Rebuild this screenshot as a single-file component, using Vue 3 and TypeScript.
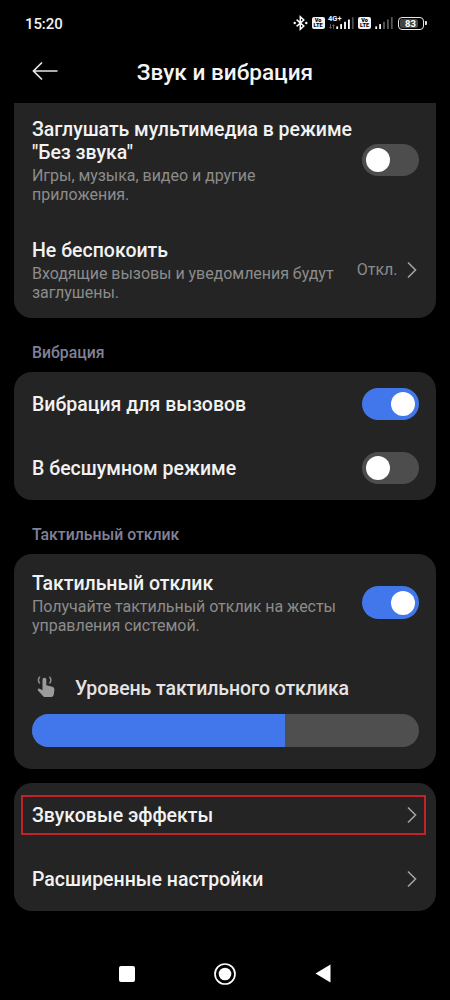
<script setup lang="ts">
import { ref } from 'vue'

const vibrateOnCall = ref(true)
const vibrateOnSilent = ref(false)
const muteMedia = ref(false)
const haptics = ref(true)
const level = ref(65.4)
const signals = [
  { label: '4G+', bars: [1, 1, 1, 1, 0.3] },
  { label: '', bars: [1, 1, 0.35, 0.35, 0.35] },
]
</script>

<template>
  <div class="screen">
    <header class="status">
      <span class="time">15:20</span>
      <div class="indicators">
        <svg class="bt" width="15" height="16" viewBox="0 0 15 16">
          <path d="M3.6 4.6 10.8 11 7.3 14.2V1.8L10.8 5 3.6 11.4" fill="none" stroke="#fff" stroke-width="1.5" />
          <circle cx="1.7" cy="8" r="1.2" fill="#fff" />
          <circle cx="13.3" cy="8" r="1.2" fill="#fff" />
        </svg>
        <template v-for="(s, i) in signals" :key="i">
          <span class="volte"><b>Vo</b><b>LTE</b></span>
          <span class="signal" :class="{ wide: s.label }">
            <span v-if="s.label" class="net">{{ s.label }}</span>
            <svg v-if="s.label" class="updown" width="6" height="5" viewBox="0 0 6 5">
              <path d="M1.5 0v4M.3 3l1.2 1.4L2.7 3M4.5 5V1M3.3 2 4.5.6 5.7 2" fill="none" stroke="#777" stroke-width=".8" />
            </svg>
            <svg width="18" height="12" viewBox="0 0 18 12">
              <rect
                v-for="(o, n) in s.bars"
                :key="n"
                :x="0.3 + n * 3.9"
                :y="9.4 - n * 2.3"
                width="1.8"
                :height="2.6 + n * 2.3"
                fill="#fff"
                :fill-opacity="o"
              />
            </svg>
          </span>
        </template>
        <span class="battery"><span class="charge">83</span></span>
      </div>
    </header>

    <div class="bar">
      <svg class="back" width="27" height="20" viewBox="0 0 27 20">
        <path d="M25.500 10H2M10 1.500 1.500 10l8.500 8.500" fill="none" stroke="#e6e6e6" stroke-width="1.700" />
      </svg>
      <h1>Звук и вибрация</h1>
    </div>

    <main>
      <section class="card clipped">
        <div class="row mute">
          <div class="text">
            <div class="name tight">Заглушать мультимедиа в режиме<br />"Без звука"</div>
            <div class="desc">Игры, музыка, видео и другие<br />приложения.</div>
          </div>
          <button class="switch" :class="{ on: muteMedia }" @click="muteMedia = !muteMedia"><i></i></button>
        </div>
        <div class="row dnd">
          <div class="text">
            <div class="name">Не беспокоить</div>
            <div class="desc">Входящие вызовы и уведомления будут<br />заглушены.</div>
          </div>
          <span class="value">Откл.</span>
          <svg class="chev" width="10" height="18" viewBox="0 0 10 18"><path d="m1 1.500 7.500 7.500L1 16.500" /></svg>
        </div>
      </section>

      <h2>Вибрация</h2>
      <section class="card">
        <div class="row single">
          <div class="name">Вибрация для вызовов</div>
          <button class="switch" :class="{ on: vibrateOnCall }" @click="vibrateOnCall = !vibrateOnCall"><i></i></button>
        </div>
        <div class="row single">
          <div class="name">В бесшумном режиме</div>
          <button class="switch" :class="{ on: vibrateOnSilent }" @click="vibrateOnSilent = !vibrateOnSilent"><i></i></button>
        </div>
      </section>

      <h2>Тактильный отклик</h2>
      <section class="card haptic">
        <div class="row feedback">
          <div class="text">
            <div class="name tight">Тактильный отклик</div>
            <div class="desc">Получайте тактильный отклик на жесты<br />управления системой.</div>
          </div>
          <button class="switch" :class="{ on: haptics }" @click="haptics = !haptics"><i></i></button>
        </div>
        <div class="level">
          <svg class="tap" width="18" height="22" viewBox="0 0 18 22">
            <path d="M5.500 3.600a1.900 1.900 0 0 1 3.800 0v5.600l6 1.500q2.300.6 2.100 2.900l-.6 4.900q-.4 2.600-2.800 2.600H8.400q-1.300 0-2.200-.9L1 14.600q-.8-1 .2-1.800.9-.7 2 .1l2.300 1.300z" fill="#9b9b9b" />
            <path d="M2.500 1.200Q.300 4 2.500 7M12.800 1.200q2.200 2.800 0 5.800" fill="none" stroke="#8d8d8d" stroke-width="1.500" stroke-linecap="round" />
          </svg>
          <span class="name">Уровень тактильного отклика</span>
        </div>
        <div class="slider"><div class="fill" :style="{ width: level + '%' }"></div></div>
      </section>

      <section class="card links">
        <div class="row single">
          <div class="name">Звуковые эффекты</div>
          <svg class="chev" width="10" height="18" viewBox="0 0 10 18"><path d="m1 1.500 7.500 7.500L1 16.500" /></svg>
          <div class="highlight"></div>
        </div>
        <div class="row single">
          <div class="name">Расширенные настройки</div>
          <svg class="chev" width="10" height="18" viewBox="0 0 10 18"><path d="m1 1.500 7.500 7.500L1 16.500" /></svg>
        </div>
      </section>
    </main>

    <nav>
      <svg width="16" height="16" viewBox="0 0 16 16"><rect width="16" height="16" rx="2" fill="#fff" /></svg>
      <svg width="22" height="22" viewBox="0 0 22 22">
        <circle cx="11" cy="11" r="10" fill="none" stroke="#fff" stroke-width="1.700" />
        <circle cx="11" cy="11" r="6.300" fill="#fff" />
      </svg>
      <svg width="16" height="19" viewBox="0 0 16 19"><path d="M15.500.5v18L.5 9.500z" fill="#fff" /></svg>
    </nav>
  </div>
</template>

<style>
body {
  background: #000;
}
</style>

<style scoped>
.screen {
  width: 450px;
  height: 1000px;
  overflow: hidden;
  background: #000;
  color: #f2f2f2;
  font-family: Roboto, 'Noto Sans', sans-serif;
  display: flex;
  flex-direction: column;
}
.status {
  height: 46px;
  padding: 0 24px 0 25px;
  display: flex;
  align-items: center;
  justify-content: space-between;
}
.time {
  font-size: 15px;
  font-weight: 500;
  letter-spacing: -0.100px;
  line-height: 20px;
  padding-top: 1px;
}
.indicators {
  display: flex;
  align-items: center;
  height: 16px;
}
.bt {
  margin-right: 3.500px;
}
.volte {
  width: 13px;
  height: 12px;
  border-radius: 2px;
  background: #f4f4f4;
  color: #000;
  display: flex;
  flex-direction: column;
  align-items: center;
  justify-content: center;
}
.volte b {
  font-size: 5.500px;
  line-height: 5px;
  font-weight: 900;
}
.signal {
  position: relative;
  height: 12px;
  margin: 0 4px;
  display: flex;
  justify-content: flex-end;
}
.signal.wide {
  width: 26px;
  margin: 0 4px 0 3.500px;
}
.net {
  position: absolute;
  left: 0;
  top: -2px;
  font-size: 7.500px;
  line-height: 7px;
  font-weight: 700;
}
.updown {
  position: absolute;
  left: 0.500px;
  bottom: 0;
}
.battery {
  position: relative;
  width: 26px;
  height: 13px;
  margin-left: 1px;
  margin-right: 2px;
  border: 1.500px solid #e8e8e8;
  border-radius: 4px;
  box-sizing: border-box;
  padding: 1px;
}
.battery::after {
  content: '';
  position: absolute;
  right: -4px;
  top: 3px;
  width: 2px;
  height: 4px;
  border-radius: 0 1px 1px 0;
  background: #ddd;
}
.charge {
  display: block;
  width: 18px;
  height: 9px;
  background: #444;
  border-radius: 2px;
  font-size: 9.500px;
  line-height: 10px;
  font-weight: 700;
  text-align: center;
  text-indent: 3px;
  color: #fff;
}
.bar {
  position: relative;
  height: 57px;
  display: flex;
  justify-content: center;
  align-items: flex-start;
}
.back {
  position: absolute;
  left: 32px;
  top: 15px;
}
h1 {
  margin: 0;
  padding-top: 13px;
  font-size: 22.600px;
  line-height: 28px;
  font-weight: 500;
  color: #f4f4f4;
}
main {
  padding: 0 14px;
}
.card {
  background: #242424;
  border-radius: 18px;
  padding: 0 17.500px 0 18px;
}
.clipped {
  border-radius: 0 0 18px 18px;
  height: 215px;
}
.row {
  position: relative;
  display: flex;
  align-items: center;
}
.text {
  flex: 1;
  padding-top: 2px;
}
.name {
  flex: 1;
  font-size: 19.500px;
  line-height: 22.500px;
  font-weight: 500;
  white-space: nowrap;
}
.name.tight {
  letter-spacing: -0.040px;
}
.single .name {
  padding-top: 2px;
}
.desc {
  font-size: 16px;
  line-height: 18.700px;
  letter-spacing: -0.040px;
  color: #8c8c8c;
  white-space: nowrap;
  margin-top: 3px;
}
.mute {
  height: 114px;
}
.mute .text {
  padding-top: 4px;
}
.dnd {
  height: 106px;
}
.value {
  font-size: 16px;
  line-height: 20px;
  color: #8c8c8c;
  margin-right: 9.500px;
}
.chev {
  margin-right: 1.500px;
  fill: none;
  stroke: #a2a2a2;
  stroke-width: 1.600px;
}
.switch {
  flex: none;
  width: 56.500px;
  height: 32.500px;
  padding: 4px;
  border: 0;
  border-radius: 17px;
  background: #4d4d4d;
  display: flex;
  align-items: center;
}
.switch.on {
  background: #4277eb;
  justify-content: flex-end;
}
.switch i {
  width: 24px;
  height: 24px;
  border-radius: 50%;
  background: #fff;
}
h2 {
  margin: 0;
  height: 54px;
  padding: 24px 0 0 18px;
  box-sizing: border-box;
  font-size: 15.800px;
  line-height: 22px;
  font-weight: 500;
  color: #81819a;
}
.single {
  height: 64px;
}
.haptic {
  height: 215px;
}
.feedback {
  height: 97px;
}
.feedback .text {
  padding-top: 3px;
}
.level {
  display: flex;
  align-items: center;
  height: 63px;
  padding: 12px 0 0 5px;
  box-sizing: border-box;
}
.tap {
  margin-bottom: 3px;
}
.level .name {
  padding: 2px 0 0 20px;
  letter-spacing: -0.080px;
  color: #e4e4e4;
}
.slider {
  height: 32.500px;
  border-radius: 17px;
  background: #4f4f4f;
  overflow: hidden;
}
.fill {
  height: 100%;
  background: #4277eb;
}
.links {
  margin-top: 14px;
}
.highlight {
  position: absolute;
  left: -11px;
  right: -7.500px;
  top: 12px;
  height: 40px;
  box-sizing: border-box;
  border: 2px solid #c62128;
}
nav {
  margin-top: auto;
  height: 53px;
  display: flex;
  align-items: center;
  justify-content: center;
  gap: 79px;
  flex: none;
}
</style>
